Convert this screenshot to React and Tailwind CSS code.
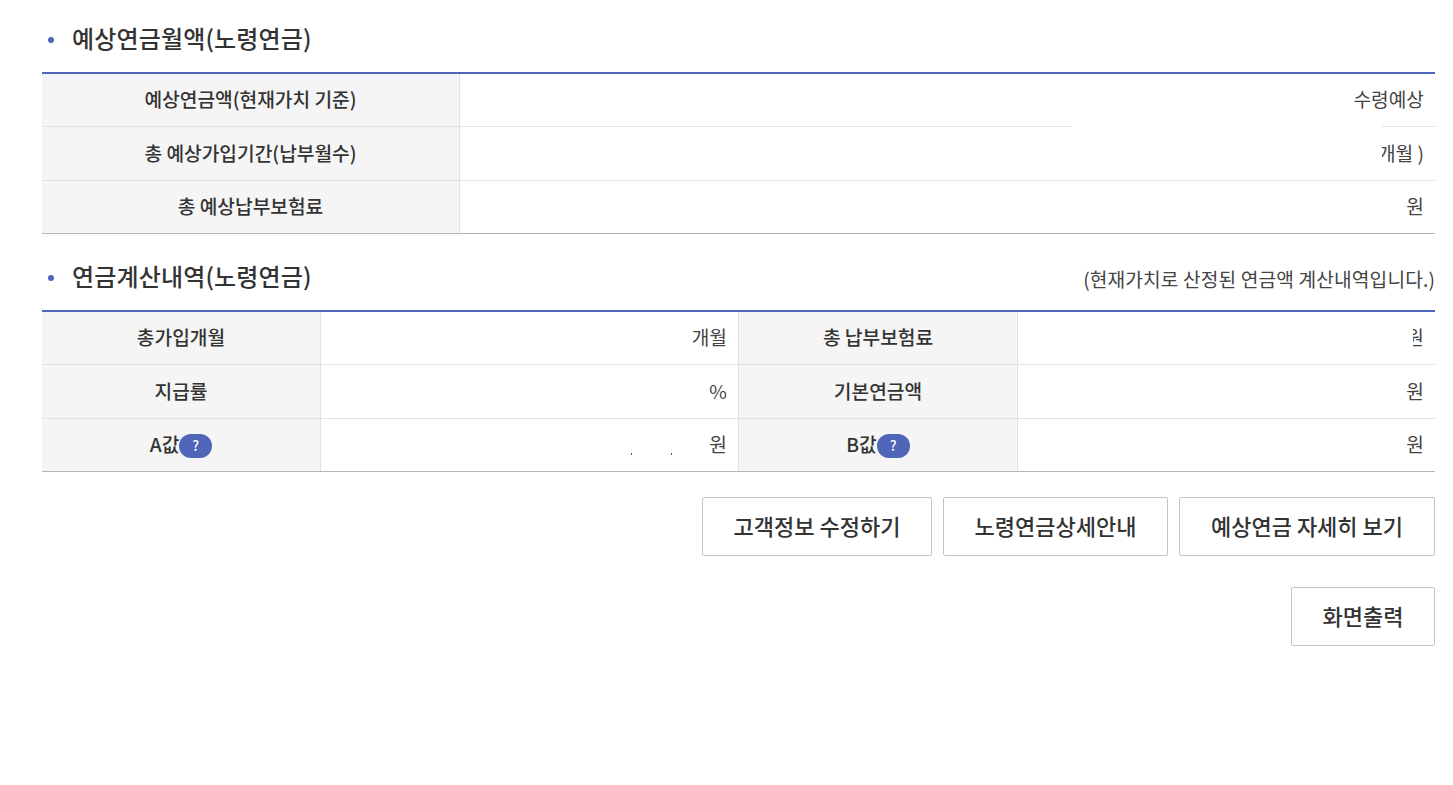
import React from "react";

const font = { fontFamily: '"Noto Sans CJK KR", "Noto Sans", sans-serif' };

function Heading({ children, note }) {
  return (
    <div className="flex items-center justify-between h-[46px]">
      <h2 className="flex items-center text-[24px] font-medium text-[#333] tracking-[0.15px] pb-[4px]">
        <span className="w-[6px] h-[6px] rounded-full bg-[#4f65b8] ml-[6px] mr-[18px] mt-[3px]"></span>
        {children}
      </h2>
      {note && <p className="text-[19.2px] text-[#444] tracking-[0.12px] pt-[3px]">{note}</p>}
    </div>
  );
}

function Th({ className, children }) {
  return (
    <div className={"flex items-center justify-center bg-[#f5f5f5] border-r border-[#e2e2e2] pb-[1px] text-[19.2px] font-medium text-[#333] " + className}>
      {children}
    </div>
  );
}

function Td({ className, children }) {
  return (
    <div className={"relative flex items-center justify-end pr-[11px] pb-[1px] text-[19.2px] text-[#444] " + className}>
      {children}
    </div>
  );
}

function Help() {
  return (
    <span className="flex items-center justify-center w-[33px] h-[24px] mt-[2px] rounded-full bg-[#4f65b8] text-[14px] font-medium text-white">?</span>
  );
}

function SummaryRow({ label, children, last, height }) {
  return (
    <div className={"flex " + height + " " + (last ? "border-b border-[#b5b5b5]" : "border-b border-[#e2e2e2]")}>
      <Th className="w-[418px]">{label}</Th>
      <Td className="flex-1">{children}</Td>
    </div>
  );
}

function DetailRow({ cells, last, height }) {
  return (
    <div className={"flex " + height + " " + (last ? "border-b border-[#b5b5b5]" : "border-b border-[#e2e2e2]")}>
      <Th className="w-[279px]">{cells[0]}</Th>
      <Td className="w-[418px] border-r border-[#e2e2e2]">{cells[1]}</Td>
      <Th className="w-[279px]">{cells[2]}</Th>
      <Td className="flex-1">{cells[3]}</Td>
    </div>
  );
}

function Button({ className, children }) {
  return (
    <button className={"h-[59px] bg-white border border-[#c4c4c4] rounded-[2px] pb-[2px] text-[22px] font-medium text-[#333] " + className}>
      {children}
    </button>
  );
}

export default function App() {
  return (
    <div style={font} className="bg-white min-h-[785px] pl-[42px] pr-[18px] pt-[17px]">
      <Heading>예상연금월액(노령연금)</Heading>
      <div className="border-t-2 border-[#4f65b8] mt-[9px]">
        <SummaryRow label="예상연금액(현재가치 기준)" height="h-[53px]">
          수령예상
          {/* masked value covers the row line and clips 개월 */}
          <span className="absolute z-10 left-[612px] top-[52px] w-[310px] h-[36px] bg-white"></span>
        </SummaryRow>
        <SummaryRow label="총 예상가입기간(납부월수)" height="h-[54px]">
          개월 )
        </SummaryRow>
        <SummaryRow label="총 예상납부보험료" last height="h-[53px]">
          원
        </SummaryRow>
      </div>

      <div className="mt-[21px]">
        <Heading note="(현재가치로 산정된 연금액 계산내역입니다.)">연금계산내역(노령연금)</Heading>
      </div>
      <div className="border-t-2 border-[#4f65b8] mt-[9px]">
        <DetailRow
          height="h-[53px]"
          cells={[
            "총가입개월",
            "개월",
            "총 납부보험료",
            <>
              원
              <span className="absolute left-[362px] top-0 w-[33px] h-[52px] bg-white"></span>
            </>,
          ]}
        />
        <DetailRow height="h-[54px]" cells={["지급률", "%", "기본연금액", "원"]} />
        <DetailRow
          height="h-[53px]"
          last
          cells={[
            <>A값<Help /></>,
            <>
              <span className="absolute left-[310px] top-[34px] w-px h-[2px] bg-[#555]"></span>
              <span className="absolute left-[350px] top-[34px] w-px h-[2px] bg-[#555]"></span>
              원
            </>,
            <>B값<Help /></>,
            "원",
          ]}
        />
      </div>

      <div className="flex justify-end gap-[11px] mt-[25px]">
        <Button className="w-[230px]">고객정보 수정하기</Button>
        <Button className="w-[225px]">노령연금상세안내</Button>
        <Button className="w-[256px]">예상연금 자세히 보기</Button>
      </div>
      <div className="flex justify-end mt-[31px]">
        <Button className="w-[144px]">화면출력</Button>
      </div>
    </div>
  );
}
